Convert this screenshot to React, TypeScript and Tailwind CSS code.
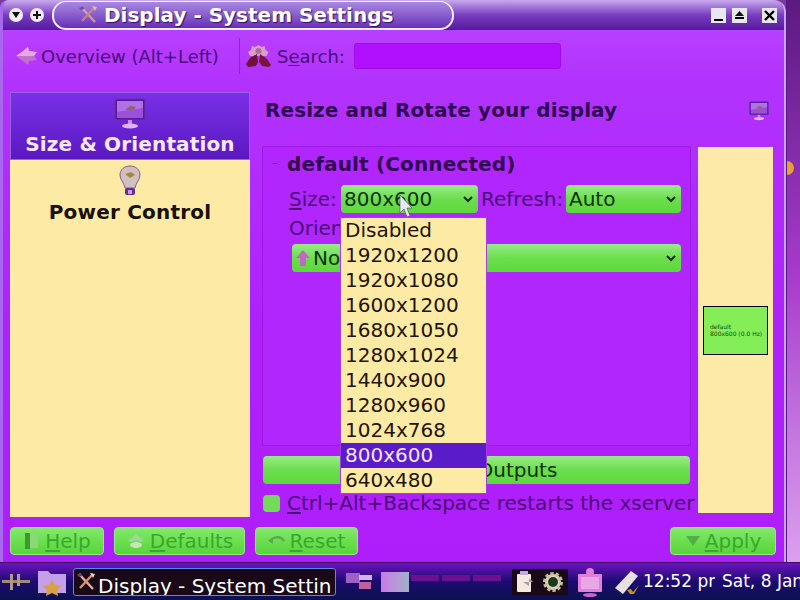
import React from "react";

const U = ({ children }: { children: React.ReactNode }) => <span className="underline underline-offset-2">{children}</span>;

const MonitorIcon = ({ size = 32 }: { size?: number }) => (
  <svg width={size} height={size} viewBox="0 0 32 32">
    <rect x="1" y="1" width="30" height="21" rx="1" fill="#5a1a98" stroke="#6a30b0" />
    <rect x="3" y="3" width="26" height="17" fill="#9a50d8" />
    <path d="M3 3h26v7L3 14z" fill="#b070e8" />
    <path d="M11 12l5-4 6 1-3 3z" fill="#8a6a50" />
    <rect x="14" y="22" width="4" height="4" fill="#c890e8" />
    <ellipse cx="16" cy="28" rx="8" ry="2.6" fill="#e0b4f8" />
  </svg>
);

const Bulb = () => (
  <svg width="22" height="32" viewBox="0 0 22 32">
    <path d="M11 1C5 1 1 5 1 10c0 5 4 7 5 13h10c1-6 5-8 5-13 0-5-4-9-10-9z" fill="#d0c0c0" stroke="#8a5a90" />
    <path d="M6 9l6-2 4 3-5 3z" fill="#a08a40" />
    <rect x="6" y="23" width="10" height="7" rx="2" fill="#6a2a90" />
    <rect x="9" y="25" width="4" height="4" fill="#c8a0d8" />
  </svg>
);

const Tools = ({ size = 20, faint = false }: { size?: number; faint?: boolean }) => (
  <svg width={size} height={size} viewBox="0 0 20 20" fill="none" opacity={faint ? 0.75 : 1}>
    <path d="M3 2l14 15" stroke="#e8b090" strokeWidth="2.4" />
    <path d="M17 2L4 16" stroke="#d89070" strokeWidth="2.4" />
    <path d="M1 3l4-2 1 3-3 1z" fill="#6a3a90" />
    <path d="M14 1l5 1-2 4z" fill="#f0d0c0" />
  </svg>
);

const Btn = ({ icon, children, className }: { icon: React.ReactNode; children: React.ReactNode; className: string }) => (
  <div className={`h-[28px] rounded-[4px] bg-gradient-to-b from-[#84e86c] via-[#6cdf50] to-[#58d43c] border border-[#98e884] flex items-center justify-center gap-[4px] text-[#38a82c] text-[20px] ${className}`}>
    {icon}
    <span>{children}</span>
  </div>
);

const Combo = ({ children, className }: { children: React.ReactNode; className: string }) => (
  <div className={`h-[28px] shrink-0 rounded-[4px] bg-gradient-to-b from-[#96ec84] via-[#6cde4c] to-[#5cd83c] flex items-center justify-between pl-[3px] pr-[5px] text-[#0e3008] text-[20px] ${className}`}>
    <div className="flex items-center">{children}</div>
    <svg width="10" height="7" viewBox="0 0 10 7" fill="none"><path d="M1 1l4 4 4-4" stroke="#102a10" strokeWidth="2" /></svg>
  </div>
);

const options = ["Disabled", "1920x1200", "1920x1080", "1600x1200", "1680x1050", "1280x1024", "1440x900", "1280x960", "1024x768", "800x600", "640x480"];

export default function App() {
  return (
    <div className="relative w-[800px] h-[600px] overflow-hidden flex flex-col bg-[#7a3a9a] text-[#4a0a78]" style={{ fontFamily: '"DejaVu Sans", sans-serif' }}>
      <div className="h-[562px] flex">
        {/* window */}
        <div className="w-[786px] shrink-0 flex flex-col bg-[#ae22fa] rounded-tr-[12px] rounded-tl-[8px] overflow-hidden border-l-[3px] border-r-[2px] border-l-[#a868ee] border-r-[#cda4f4]">
          {/* title */}
          <div className="h-[30px] shrink-0 flex items-center bg-gradient-to-b from-[#c8a8ec] via-[#7a3cc0] to-[#54189c]">
            <div className="w-[49px] pl-[6px] flex items-center gap-[7px]">
              <div className="w-[14px] h-[14px] rounded-full bg-[#f2ecf8] flex items-center justify-center">
                <svg width="8" height="6" viewBox="0 0 8 6"><path d="M0 0h8L4 6z" fill="#111" /></svg>
              </div>
              <div className="w-[14px] h-[14px] rounded-full bg-[#f2ecf8] flex items-center justify-center">
                <svg width="8" height="8" viewBox="0 0 8 8"><path d="M3 0h2v3h3v2H5v3H3V5H0V3h3z" fill="#111" /></svg>
              </div>
            </div>
            <div className="w-[402px] h-[29px] rounded-[14px] border-2 border-[#f4ecff] border-t-[1px] bg-gradient-to-b from-[#a888e0] to-[#6a2cb8] flex items-center pl-[24px] gap-[6px]">
              <Tools faint />
              <span className="text-white font-bold text-[20px] [text-shadow:1px_1px_1px_#301060]">Display - System Settings</span>
            </div>
            <div className="flex-1 flex justify-end items-center pr-[7px] gap-[6px]">
              <div className="w-[15px] h-[15px] bg-[#e8e6f0] flex items-end justify-center pb-[2px]"><div className="w-[9px] h-[2px] bg-black" /></div>
              <div className="w-[15px] h-[15px] bg-[#e8e6f0] flex flex-col items-center justify-center gap-[1px]">
                <svg width="9" height="5" viewBox="0 0 9 5"><path d="M4.5 0L9 5H0z" fill="#111" /></svg>
                <div className="w-[9px] h-[2px] bg-black" />
              </div>
              <div className="w-[15px] h-[15px] ml-[9px] bg-[#e8e6f0] flex items-center justify-center">
                <svg width="11" height="11" viewBox="0 0 11 11"><path d="M1 1l9 9M10 1l-9 9" stroke="#000" strokeWidth="2.4" /></svg>
              </div>
            </div>
          </div>
          {/* toolbar */}
          <div className="h-[52px] shrink-0 flex items-center text-[18px] bg-gradient-to-b from-[#b83fff] to-[#b232fd]">
            <div className="w-[236px] pl-[13px] flex items-center gap-[2px]">
              <svg width="23" height="20" viewBox="0 0 23 20"><path d="M0 10l7-5 5-4 1 4 8 1-3 4 3 4-8 1-1 4-5-4z" fill="#c470c8" /><path d="M0 10l7-5 5-4 1 4 8 1-3 4z" fill="#e4a8e4" /></svg>
              <span>Overview (Alt+Left)</span>
            </div>
            <div className="w-px h-[36px] bg-[#9420dc]" />
            <div className="ml-[6px] flex items-center gap-[6px]">
              <svg width="25" height="24" viewBox="0 0 25 24">
                <path d="M12.5 1l3 2 3-1 1 4 3 2-2 4H4L2 8l3-2 1-4 3 1z" fill="#d8a0c8" />
                <circle cx="12.5" cy="7" r="3" fill="#a87098" />
                <path d="M11 10l1 8-2 4-8 1-2-3 4-6z" fill="#6e1238" />
                <path d="M14 10l7 5 4 6-2 2-7-1-3-4z" fill="#7c1438" />
              </svg>
              <span>S<U>e</U>arch:</span>
            </div>
            <div className="ml-[9px] w-[207px] h-[26px] bg-[#b010fe] rounded-[3px] border border-[#a00ce8]" />
          </div>
          {/* body */}
          <div className="flex-1 min-h-0 flex flex-col pl-[7px] pt-[10px] pb-[7px] pr-[10px] bg-gradient-to-b from-[#b232fd] via-[#ae22fa] to-[#ae1efa]">
            <div className="flex-1 flex min-h-0">
              <div className="w-[240px] shrink-0 bg-[#fdeaa4] flex flex-col items-center">
                <div className="w-full h-[68px] bg-gradient-to-b from-[#7a2fe8] to-[#5a18c0] border border-[#9a60e0] flex flex-col items-center pt-[5px]">
                  <MonitorIcon />
                  <span className="text-[#f8e8fc] font-bold text-[20px] leading-[24px] tracking-[0.15px] mt-[2px]">Size &amp; Orientation</span>
                </div>
                <div className="mt-[5px] flex flex-col items-center">
                  <Bulb />
                  <span className="text-[#181008] font-bold text-[20px] leading-[24px] tracking-[0.2px] mt-[3px]">Power Control</span>
                </div>
              </div>
              <div className="flex-1 min-w-0 pl-[12px] flex">
                <div className="w-[429px] shrink-0 flex flex-col">
                  <div className="h-[54px] shrink-0 pl-[3px] flex items-center pb-[18px] font-bold text-[20px] text-[#2e0850] tracking-[0.1px]">Resize and Rotate your display</div>
                  <div className="h-[300px] shrink-0 border border-[#a018e8] rounded-[2px] bg-[#b026fc] px-[11px]">
                    <div className="flex items-center h-[33px] gap-[10px]">
                      <span className="w-[4px] h-px bg-[#6a1a90] ml-[-1px]" />
                      <span className="font-bold text-[20px] text-[#30084e] tracking-[0.15px]">default (Connected)</span>
                    </div>
                    <div className="flex items-center text-[20px] h-[28px] mt-[5px] pl-[15px]">
                      <span className="w-[52px] shrink-0"><U>S</U>ize:</span>
                      <Combo className="w-[137px]">800x600</Combo>
                      <span className="ml-[3px] w-[85px] shrink-0">Refresh:</span>
                      <Combo className="w-[115px]">Auto</Combo>
                    </div>
                    <div className="text-[20px] h-[28px] mt-[1px] pl-[15px] leading-[28px]">Orientation:</div>
                    <Combo className="w-[389px] ml-[18px] mt-[2px]">
                      <svg width="16" height="18" viewBox="0 0 16 18" className="mr-[2px]"><path d="M8 1l7 8h-4v8H5V9H1z" fill="#c468c8" /></svg>
                      Normal
                    </Combo>
                  </div>
                  <div className="h-[28px] shrink-0 mt-[10px] ml-[1px] w-[427px] rounded-[4px] bg-gradient-to-b from-[#96ec84] via-[#6cde4c] to-[#5cd83c] flex items-center justify-center text-[20px] text-[#103008]">Identify Outputs</div>
                  <div className="flex items-center mt-[5px] text-[20px] h-[28px] whitespace-nowrap">
                    <div className="w-[17px] h-[17px] shrink-0 ml-[1px] mr-[7px] rounded-[4px] bg-[#72dc58]" />
                    <span><U>C</U>trl+Alt+Backspace restarts the xserver</span>
                  </div>
                </div>
                <div className="flex-1 flex flex-col items-end">
                  <div className="h-[54px] shrink-0 flex items-center pr-[5px] pb-[16px]"><MonitorIcon size={20} /></div>
                  <div className="w-[75px] h-[366px] mt-[1px] mr-[1px] bg-[#fdeaa8] flex items-center justify-center shrink-0">
                    <div className="w-[65px] h-[49px] border border-black bg-[#84ee58] flex flex-col justify-center pl-[6px] text-[6px] leading-[7px] text-[#0a5008] whitespace-nowrap">
                      <span>default</span>
                      <span>800x600 (0.0 Hz)</span>
                    </div>
                  </div>
                </div>
              </div>
            </div>
            <div className="h-[28px] shrink-0 mt-[10px] flex gap-[10px]">
              <Btn className="w-[94px]" icon={<svg width="18" height="20" viewBox="0 0 18 20"><rect x="2" y="2" width="5" height="16" fill="#3a9a30" /><rect x="7" y="3" width="8" height="14" fill="#8ad87a" /></svg>}><U>H</U>elp</Btn>
              <Btn className="w-[131px]" icon={<svg width="20" height="18" viewBox="0 0 20 18"><path d="M2 9l8-7 8 7-4 1c-1-2-7-2-8 0z" fill="#9ad8a0" /><ellipse cx="10" cy="13" rx="6" ry="3" fill="#c8e8b0" /></svg>}><U>D</U>efaults</Btn>
              <Btn className="w-[103px]" icon={<svg width="18" height="14" viewBox="0 0 18 14" fill="none"><path d="M2 8c2-5 10-7 14-1" stroke="#5aa850" strokeWidth="2.5" /><path d="M0 6l5-2v6z" fill="#5aa850" /></svg>}><U>R</U>eset</Btn>
              <div className="flex-1" />
              <Btn className="w-[106px] mr-[-2px]" icon={<svg width="16" height="12" viewBox="0 0 16 12"><path d="M1 1h14L8 11z" fill="#52b048" /></svg>}><U>A</U>pply</Btn>
            </div>
          </div>
        </div>
        {/* desktop strip */}
        <div className="flex-1 border-l border-[#50188c] bg-gradient-to-b from-[#5c1a80] via-[#a83ccc] to-[#dca0ec]" />
      </div>
      {/* taskbar */}
      <div className="h-[38px] shrink-0 flex items-center bg-gradient-to-b from-[#6c10c0] via-[#1c0a70] to-[#0a1050] border-t border-[#3a0a60] text-white whitespace-nowrap">
        <svg width="30" height="22" viewBox="0 0 30 22" className="ml-[1px] shrink-0"><path d="M1 9h28v3H1z" fill="#a08a70" /><path d="M9 3h3v16H9zM16 3h3v12h-3z" fill="#b09a80" /></svg>
        <svg width="30" height="30" viewBox="0 0 30 30" className="ml-[6px] shrink-0"><path d="M1 4h10l3 3h15v19H1z" fill="#c4a0e8" /><path d="M15 13l3 5 6 1-4 4 1 6-6-3-6 3 1-6-4-4 6-1z" fill="#d8a040" /></svg>
        <div className="ml-[6px] w-[263px] shrink-0 h-[28px] rounded-[3px] border border-[#5a8ae0] bg-[#180818] flex items-center pl-[2px] gap-[2px] overflow-hidden">
          <Tools />
          <span className="text-[20px] leading-[28px] translate-y-[4px]">Display - System Settin</span>
        </div>
        <svg width="28" height="20" viewBox="0 0 28 20" className="ml-[9px] shrink-0"><rect x="1" y="1" width="14" height="10" fill="#a060c8" /><rect x="14" y="3" width="13" height="5" fill="#d8b0e8" /><rect x="14" y="10" width="12" height="7" fill="#c060a0" /></svg>
        <div className="w-[28px] shrink-0 h-[20px] ml-[8px] bg-gradient-to-r from-[#c878e8] to-[#a0b0c8]" />
        <div className="w-[97px] shrink-0 h-[24px] flex items-start pt-[5px] gap-[3px] pl-[3px] ml-[-1px]">
          <div className="w-[28px] h-[6px] bg-[#6a1090]" /><div className="w-[28px] h-[6px] bg-[#6a1090]" /><div className="w-[28px] h-[6px] bg-[#6a1090]" />
        </div>
        <div className="w-[56px] shrink-0 h-[26px] ml-[7px] bg-[#180818] flex items-center justify-center gap-[6px]">
          <svg width="20" height="24" viewBox="0 0 20 24"><rect x="1" y="4" width="14" height="18" rx="1" fill="#f4e8e0" /><rect x="4" y="1" width="8" height="4" fill="#c8a8d8" /><path d="M7 12h10l-4-4v8z" fill="#a8a098" /></svg>
          <svg width="22" height="22" viewBox="0 0 22 22"><circle cx="11" cy="11" r="8" fill="#e0d8b8" stroke="#c8c0a0" strokeWidth="4" strokeDasharray="3 2" /><circle cx="11" cy="11" r="5" fill="#1a3a20" /></svg>
        </div>
        <svg width="26" height="30" viewBox="0 0 26 30" className="ml-[9px] shrink-0"><rect x="1" y="7" width="24" height="18" rx="1" fill="#e080d8" /><rect x="4" y="10" width="18" height="12" fill="#e8a8e8" /><circle cx="13" cy="5" r="4" fill="#e080d8" /><ellipse cx="13" cy="28" rx="7" ry="2" fill="#d060d0" /></svg>
        <svg width="28" height="28" viewBox="0 0 28 28" className="ml-[10px] shrink-0"><path d="M2 20L18 3l7 5-15 18z" fill="#e8e0e0" /><path d="M14 22l4-1 2 3 6-7-5 9h-4z" fill="#c09020" /></svg>
        <div className="w-[72px] shrink-0 overflow-hidden ml-[2px] mr-[7px] text-[17px]"><span>12:52 pm</span></div>
        <span className="text-[17px]">Sat, 8 Jan</span>
      </div>

      {/* popup list */}
      <div className="absolute left-[340px] top-[217px] w-[147px] h-[277px] bg-[#fdeaa4] border border-[#a040e0] flex flex-col text-[20px] text-[#1e1408]">
        {options.map((o, i) => (
          <div key={i} className={`h-[25px] leading-[25px] pl-[4px] ${i === 9 ? "bg-[#5a1cc8] text-[#f4e4fc]" : ""}`}>{o}</div>
        ))}
      </div>
      {/* mouse cursor */}
      <svg className="absolute left-[398px] top-[194px]" width="16" height="24" viewBox="0 0 16 24"><path d="M2 1l12 13H9l3 8-3 1-3-8-4 4z" fill="#e8e8f0" stroke="#504060" strokeWidth="0.6" /></svg>
      {/* wallpaper marker */}
      <div className="absolute left-[787px] top-[161px] w-[7px] h-[14px] rounded-r-full bg-[#e8a030]" />
    </div>
  );
}
